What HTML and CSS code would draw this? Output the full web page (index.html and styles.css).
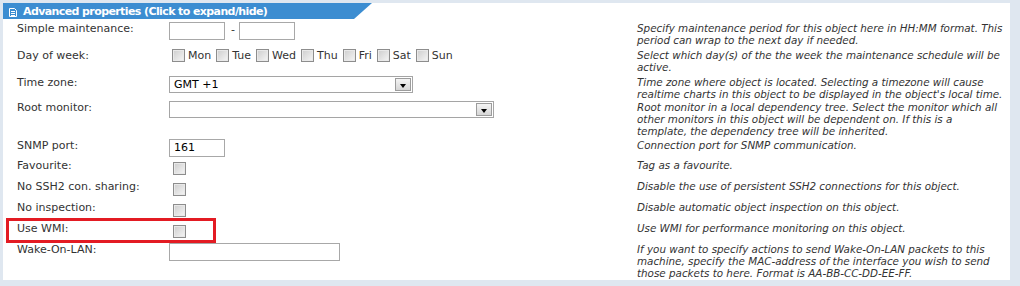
FILE: index.html
```html
<!DOCTYPE html>
<html lang="en">

<head>
    <meta charset="UTF-8" />
    <title>Advanced properties</title>
    <link rel="stylesheet" href="styles.css">
</head>

<body>
    <div class="panel">
        <div class="panel-head">
            <svg class="head-icon" width="8" height="9" viewBox="0 0 8 9">
                <path d="M0.5 0.5h5l2 2v6h-7z" fill="none" stroke="#fff" stroke-width="1" />
                <path d="M2 3.5h4M2 5.5h4M2 7.5h4" stroke="#fff" stroke-width="1" />
            </svg>
            <span>Advanced properties (Click to expand/hide)</span>
        </div>

        <table class="props">
            <colgroup>
                <col class="c-lbl">
                <col class="c-fld">
                <col class="c-desc">
            </colgroup>
            <tr class="pad-lg">
                <td class="lbl">Simple maintenance:</td>
                <td>
                    <div class="range">
                        <input type="text" class="txt short">
                        <span class="dash">-</span>
                        <input type="text" class="txt short">
                    </div>
                </td>
                <td class="desc">Specify maintenance period for this object here in HH:MM format. This period can wrap to the next day if needed.</td>
            </tr>
            <tr class="pad-lg">
                <td class="lbl">Day of week:</td>
                <td>
                    <div class="days">
                        <label><input type="checkbox" class="cb">Mon</label>
                        <label><input type="checkbox" class="cb">Tue</label>
                        <label><input type="checkbox" class="cb">Wed</label>
                        <label><input type="checkbox" class="cb">Thu</label>
                        <label><input type="checkbox" class="cb">Fri</label>
                        <label><input type="checkbox" class="cb">Sat</label>
                        <label><input type="checkbox" class="cb">Sun</label>
                    </div>
                </td>
                <td class="desc">Select which day(s) of the the week the maintenance schedule will be active.</td>
            </tr>
            <tr class="pad-sm">
                <td class="lbl">Time zone:</td>
                <td>
                    <div class="select sel-tz"><span>GMT +1</span><span class="drop"></span></div>
                </td>
                <td class="desc">Time zone where object is located. Selecting a timezone will cause realtime charts in this object to be displayed in the object's local time.</td>
            </tr>
            <tr>
                <td class="lbl">Root monitor:</td>
                <td>
                    <div class="select sel-root"><span></span><span class="drop"></span></div>
                </td>
                <td class="desc">Root monitor in a local dependency tree. Select the monitor which all other monitors in this object will be dependent on. If this is a template, the dependency tree will be inherited.</td>
            </tr>
            <tr>
                <td class="lbl">SNMP port:</td>
                <td><input type="text" class="txt short" value="161"></td>
                <td class="desc">Connection port for SNMP communication.</td>
            </tr>
            <tr>
                <td class="lbl">Favourite:</td>
                <td><input type="checkbox" class="cb single"></td>
                <td class="desc">Tag as a favourite.</td>
            </tr>
            <tr>
                <td class="lbl">No SSH2 con. sharing:</td>
                <td><input type="checkbox" class="cb single"></td>
                <td class="desc">Disable the use of persistent SSH2 connections for this object.</td>
            </tr>
            <tr>
                <td class="lbl">No inspection:</td>
                <td><input type="checkbox" class="cb single"></td>
                <td class="desc">Disable automatic object inspection on this object.</td>
            </tr>
            <tr>
                <td class="lbl marked">Use WMI:<span class="highlight"></span></td>
                <td><input type="checkbox" class="cb single"></td>
                <td class="desc">Use WMI for performance monitoring on this object.</td>
            </tr>
            <tr>
                <td class="lbl">Wake-On-LAN:</td>
                <td><input type="text" class="txt long"></td>
                <td class="desc">If you want to specify actions to send Wake-On-LAN packets to this machine, specify the MAC-address of the interface you wish to send those packets to here. Format is AA-BB-CC-DD-EE-FF.</td>
            </tr>
        </table>
    </div>
</body>

</html>
```

FILE: styles.css
```css
body {
    margin: 0;
    background: #dfe7f0;
    font-family: "DejaVu Sans", Verdana, sans-serif;
    font-size: 11px;
    color: #333;
}

.panel {
    margin: 3px 0 0 3px;
    width: 1007px;
    height: 277px;
    background: #fff;
}

/* blue tab with slanted end */
.panel-head {
    box-sizing: border-box;
    width: 369px;
    height: 16px;
    padding-left: 6px;
    display: flex;
    align-items: center;
    gap: 6px;
    background: #3c8dd1;
    clip-path: polygon(0 0, 100% 0, calc(100% - 18px) 100%, 0 100%);
    color: #fff;
    font-weight: bold;
    letter-spacing: -0.6px;
    line-height: 15px;
}

.head-icon {
    margin-top: 3px;
    flex: none;
}

.props {
    margin: 1.75px 0 0 14px;
    border-collapse: collapse;
    border-spacing: 0;
    table-layout: fixed;
}

.c-lbl {
    width: 152px;
}

.c-fld {
    width: 468px;
}

.c-desc {
    width: 367px;
}

.props td {
    padding: 1px 0;
    vertical-align: top;
}

.props .pad-lg td {
    padding-bottom: 2px;
}

.props .pad-sm td {
    padding-bottom: 0;
}

.lbl {
    line-height: 13px;
    white-space: nowrap;
}

.desc {
    font-size: 10.35px;
    font-style: italic;
    line-height: 12px;
}

/* text inputs */
.txt {
    display: block;
    box-sizing: border-box;
    height: 18px;
    margin: 0;
    padding: 0 4px;
    border: 1px solid #a8a8a8;
    background: #fff;
    font-family: inherit;
    font-size: 11px;
    color: #000;
    outline: none;
}

.short {
    width: 56px;
}

.long {
    width: 171px;
}

.range {
    display: flex;
    align-items: flex-start;
}

.dash {
    margin: 0 4px 0 6px;
    line-height: 15px;
}

/* checkboxes */
.cb {
    appearance: none;
    -webkit-appearance: none;
    box-sizing: border-box;
    width: 13px;
    height: 13px;
    margin: 0;
    border: 1px solid #8d8d8d;
    background: linear-gradient(135deg, #cdcdcd, #f6f6f6);
    box-shadow: inset 0 0 0 1px #e9e9e9;
}

.cb.single {
    display: block;
    margin: 3px 0 3px 4px;
}

.days {
    display: flex;
    padding: 0 0 0 3px;
}

.days label {
    display: flex;
    align-items: center;
    margin-right: 5px;
    line-height: 13px;
}

.days .cb {
    margin-right: 3px;
}

/* dropdowns */
.select {
    box-sizing: border-box;
    height: 17px;
    display: flex;
    justify-content: space-between;
    border: 1px solid #a5a5a5;
    background: #fff;
    color: #000;
    line-height: 15px;
}

.select span:first-child {
    padding-left: 4px;
}

.sel-tz {
    width: 244px;
}

.sel-root {
    width: 325px;
}

.drop {
    box-sizing: border-box;
    width: 16px;
    height: 13px;
    margin: 1px;
    display: flex;
    justify-content: center;
    align-items: flex-end;
    padding-bottom: 2px;
    border: 1px solid #9c9c9c;
    background: linear-gradient(#f4f4f4, #d6d6d6);
}

.drop::after {
    content: "";
    border-left: 3.5px solid transparent;
    border-right: 3.5px solid transparent;
    border-top: 4px solid #000;
}

/* red annotation box around the WMI row */
.marked {
    position: relative;
}

.highlight {
    position: absolute;
    left: -11px;
    top: -3px;
    width: 210px;
    height: 25px;
    box-sizing: border-box;
    border: 3px solid #e31b23;
}
```
